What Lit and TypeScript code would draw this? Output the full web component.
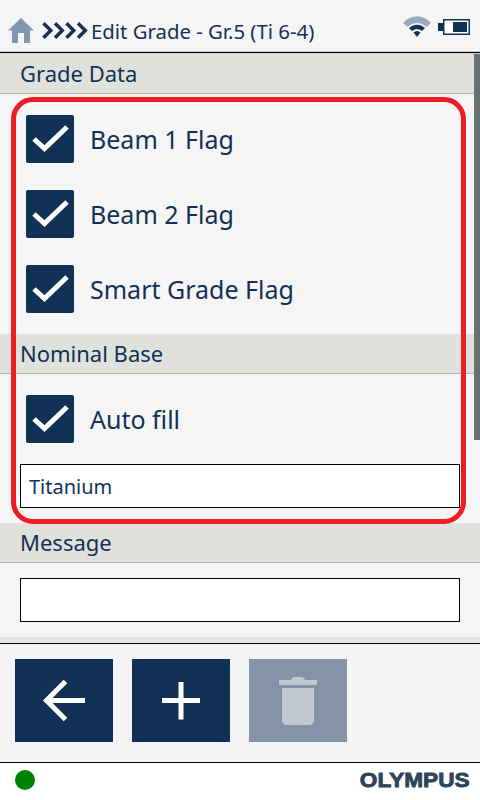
import { LitElement, html, css, svg } from "lit";
import { customElement } from "lit/decorators.js";

const check = html`<svg class="chk" viewBox="0 0 48 48"><path d="M8 24 L18.500 33.500 L41 12" fill="none" stroke="#fff" stroke-width="5"/></svg>`;

@customElement("app-root")
export class AppRoot extends LitElement {
  static styles = css`
    :host { display: block; width: 480px; height: 800px; position: relative; overflow: hidden; background: #f5f5f5;
      font-family: "Noto Sans", sans-serif; color: #123156; }
    .top { height: 53px; box-sizing: border-box; display: flex; align-items: center; padding: 9px 0 0 8px; background: #f5f5f5; border-bottom: 1.5px solid #000; box-shadow: 0 1px 0 #ccc, inset 0 -1px 0 #ccc; }
    .top .title { font-size: 20.35px; margin-left: 3px; white-space: nowrap; line-height: 24px; }
    .home { width: 26px; height: 25px; display: block; flex: none; }
    .chev { width: 46px; height: 17px; margin-left: 8px; display: block; flex: none; }
    .spacer { flex: 1; }
    .wifi { width: 28px; height: 21px; margin-right: 7px; margin-top: -8px; flex: none; }
    .batt { width: 32px; height: 16px; margin-right: 10px; margin-top: -7px; flex: none; }
    .sec { height: 40px; box-sizing: border-box; background: #e0e1dc; border-bottom: 1px solid #b5b5b2; padding-left: 20px; font-size: 22px; line-height: 38px; }
    .first { margin-top: 1px; }
    .rows { padding-top: 21px; display: flex; flex-direction: column; gap: 27px; height: 240px; box-sizing: border-box; }
    .row { display: flex; align-items: center; gap: 16px; padding-left: 26px; height: 48px; font-size: 25px; }
    .box { width: 48px; height: 48px; background: #123156; border-radius: 2px; flex: none; }
    .chk { width: 48px; height: 48px; display: block; }
    .nb { padding-top: 21px; height: 149px; box-sizing: border-box; }
    .field { box-sizing: border-box; margin-left: 20px; width: 440px; height: 44px; background: #fff; border: 1.5px solid #000; padding-left: 8px; font-size: 20px; line-height: 43px; color: #123156; }
    .nb .field { margin-top: 21px; }
    .msg { padding-top: 15px; height: 74px; box-sizing: border-box; }
    .band { height: 6px; background: #e4e4e2; }
    .foot { box-sizing: border-box; height: 120px; background: #f4f4f4; border-top: 1.5px solid #000; border-bottom: 1.5px solid #000; padding: 14.5px 15px 0; display: flex; gap: 19px; }
    .btn { width: 98px; height: 83px; background: #123156; display: flex; align-items: center; justify-content: center; }
    .btn.off { background: #8493a5; }
    .btn svg { display: block; width: 98px; height: 83px; }
    .status { height: 37px; box-sizing: border-box; background: #fff; display: flex; align-items: center; padding: 0 10px 3px 15px; justify-content: space-between; }
    .dot { width: 20px; height: 20px; border-radius: 50%; background: #008000; }
    .logo { font-family: "Liberation Sans", sans-serif; font-weight: 700; font-size: 19.5px; color: #2d4358; -webkit-text-stroke: 0.8px #2d4358; transform: scaleX(1.16); transform-origin: right center; line-height: 20px; }
    .scroll { position: absolute; left: 474px; top: 54px; width: 6px; height: 386px; background: #6a7173; }
    .red { position: absolute; left: 11px; top: 97px; width: 455px; height: 427px; box-sizing: border-box; border: 5px solid #ee1c25; border-radius: 22px; pointer-events: none; }
  `;

  render() {
    const row = (t: string) => html`<div class="row"><div class="box">${check}</div><span>${t}</span></div>`;
    return html`
      <div class="top">
        <svg class="home" viewBox="0 0 26 25"><path d="M13 0 L26 12.500 H22 V25 H16 V15 H10 V25 H4 V12.500 H0 Z" fill="#8197b0"/></svg>
        <svg class="chev" viewBox="0 0 46 17">${[0, 11.5, 23, 34.5].map((x) => svg`<path d="M${x + 1.5} 1.200 L${x + 8.8} 8.500 L${x + 1.5} 15.800" fill="none" stroke="#123156" stroke-width="3.4"/>`)}</svg>
        <span class="title">Edit Grade - Gr.5 (Ti 6-4)</span>
        <span class="spacer"></span>
        <svg class="wifi" viewBox="0 0 28 21">
          <path d="M0 7 C8 -2 20 -2 28 7 L23.500 11 C17 5.500 11 5.500 4.500 11 Z" fill="#9aaabc"/>
          <path d="M6 12 C11 7.500 17 7.500 22 12 L19 15 C16 12.500 12 12.500 9 15 Z" fill="#123156"/>
          <path d="M10.500 16.500 C13 14.500 15 14.500 17.500 16.500 L14 21 Z" fill="#123156"/>
        </svg>
        <svg class="batt" viewBox="0 0 32 16">
          <rect x="0" y="4" width="5" height="8" fill="#123156"/>
          <rect x="5" y="0" width="27" height="16" fill="#123156"/>
          <rect x="6.500" y="1.500" width="24" height="13" fill="#fff"/>
          <rect x="15" y="3" width="14" height="10" fill="#123156"/>
        </svg>
      </div>
      <div class="sec first">Grade Data</div>
      <div class="rows">${row("Beam 1 Flag")}${row("Beam 2 Flag")}${row("Smart Grade Flag")}</div>
      <div class="sec">Nominal Base</div>
      <div class="nb">
        ${row("Auto fill")}
        <div class="field">Titanium</div>
      </div>
      <div class="sec">Message</div>
      <div class="msg"><div class="field"></div></div>
      <div class="band"></div>
      <div class="foot">
        <div class="btn"><svg viewBox="0 0 98 83"><path d="M70 41.500 H32 M50.500 22.500 L31.500 41.500 L50.500 60.500" fill="none" stroke="#fff" stroke-width="5"/></svg></div>
        <div class="btn"><svg viewBox="0 0 98 83"><path d="M49 23 V60.500 M30 41.500 H68" fill="none" stroke="#fff" stroke-width="5"/></svg></div>
        <div class="btn off"><svg viewBox="0 0 98 83">
          <path d="M30 21 H42 Q43 18 46 18 H52 Q55 18 56 21 H68 V26 H30 Z" fill="#c0c8d2"/>
          <path d="M33 29 H65 V61 Q65 66 60 66 H38 Q33 66 33 61 Z" fill="#c0c8d2"/>
        </svg></div>
      </div>
      <div class="status"><div class="dot"></div><div class="logo">OLYMPUS</div></div>
      <div class="scroll"></div>
      <div class="red"></div>
    `;
  }
}
